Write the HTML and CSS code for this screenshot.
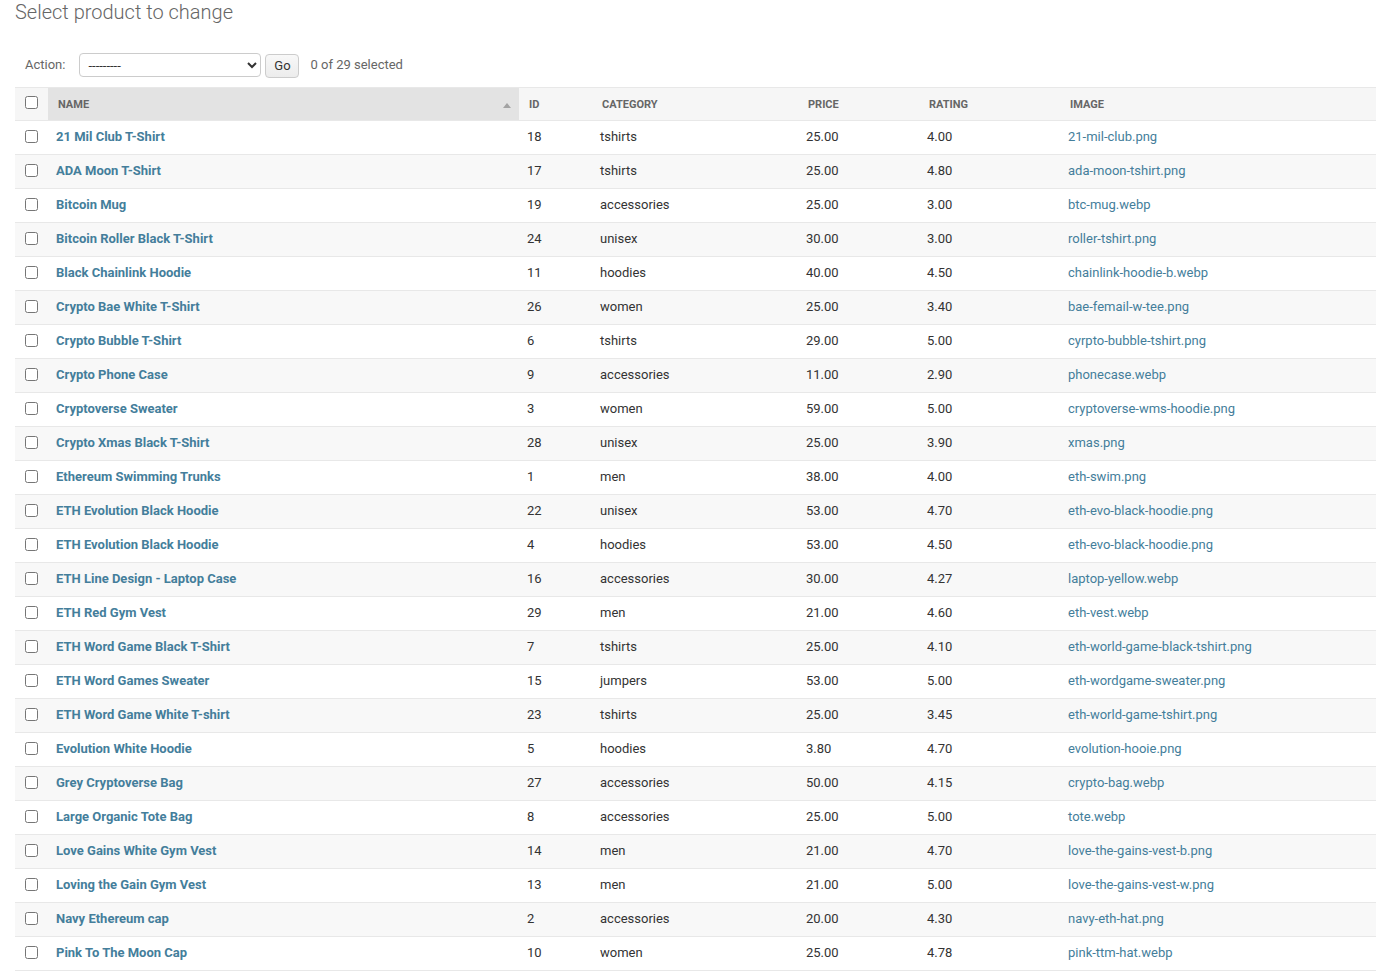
FILE: index.html
```html
<!DOCTYPE html>
<html lang="en">
<head>
<meta charset="utf-8">
<title>Select product to change</title>
<link rel="stylesheet" href="styles.css">
</head>
<body>
<div class="content">
  <h1 class="title">Select product to change</h1>
  <div class="actions">
    <label class="action-label">Action:</label>
    <select class="action-select"><option>---------</option><option>Delete selected products</option></select>
    <button class="go-btn" type="button">Go</button>
    <span class="counter">0 of 29 selected</span>
  </div>
  <table class="result-list">
    <colgroup>
      <col class="c-check"><col class="c-name"><col class="c-id"><col class="c-cat"><col class="c-price"><col class="c-rating"><col class="c-image">
    </colgroup>
    <thead>
      <tr>
        <th class="check-col"><input type="checkbox"></th>
        <th class="sorted"><div class="th-inner"><span>Name</span><svg class="sort-icon" width="8" height="5" viewBox="0 0 8 5"><path d="M0 5 L4 0 L8 5 Z" fill="#a3a3a3"/></svg></div></th>
        <th>Id</th>
        <th>Category</th>
        <th>Price</th>
        <th>Rating</th>
        <th>Image</th>
      </tr>
    </thead>
    <tbody>
      <tr><td class="check-col"><input type="checkbox"></td><th><a href="#">21 Mil Club T-Shirt</a></th><td>18</td><td>tshirts</td><td>25.00</td><td>4.00</td><td><a class="file" href="#">21-mil-club.png</a></td></tr>
      <tr><td class="check-col"><input type="checkbox"></td><th><a href="#">ADA Moon T-Shirt</a></th><td>17</td><td>tshirts</td><td>25.00</td><td>4.80</td><td><a class="file" href="#">ada-moon-tshirt.png</a></td></tr>
      <tr><td class="check-col"><input type="checkbox"></td><th><a href="#">Bitcoin Mug</a></th><td>19</td><td>accessories</td><td>25.00</td><td>3.00</td><td><a class="file" href="#">btc-mug.webp</a></td></tr>
      <tr><td class="check-col"><input type="checkbox"></td><th><a href="#">Bitcoin Roller Black T-Shirt</a></th><td>24</td><td>unisex</td><td>30.00</td><td>3.00</td><td><a class="file" href="#">roller-tshirt.png</a></td></tr>
      <tr><td class="check-col"><input type="checkbox"></td><th><a href="#">Black Chainlink Hoodie</a></th><td>11</td><td>hoodies</td><td>40.00</td><td>4.50</td><td><a class="file" href="#">chainlink-hoodie-b.webp</a></td></tr>
      <tr><td class="check-col"><input type="checkbox"></td><th><a href="#">Crypto Bae White T-Shirt</a></th><td>26</td><td>women</td><td>25.00</td><td>3.40</td><td><a class="file" href="#">bae-femail-w-tee.png</a></td></tr>
      <tr><td class="check-col"><input type="checkbox"></td><th><a href="#">Crypto Bubble T-Shirt</a></th><td>6</td><td>tshirts</td><td>29.00</td><td>5.00</td><td><a class="file" href="#">cyrpto-bubble-tshirt.png</a></td></tr>
      <tr><td class="check-col"><input type="checkbox"></td><th><a href="#">Crypto Phone Case</a></th><td>9</td><td>accessories</td><td>11.00</td><td>2.90</td><td><a class="file" href="#">phonecase.webp</a></td></tr>
      <tr><td class="check-col"><input type="checkbox"></td><th><a href="#">Cryptoverse Sweater</a></th><td>3</td><td>women</td><td>59.00</td><td>5.00</td><td><a class="file" href="#">cryptoverse-wms-hoodie.png</a></td></tr>
      <tr><td class="check-col"><input type="checkbox"></td><th><a href="#">Crypto Xmas Black T-Shirt</a></th><td>28</td><td>unisex</td><td>25.00</td><td>3.90</td><td><a class="file" href="#">xmas.png</a></td></tr>
      <tr><td class="check-col"><input type="checkbox"></td><th><a href="#">Ethereum Swimming Trunks</a></th><td>1</td><td>men</td><td>38.00</td><td>4.00</td><td><a class="file" href="#">eth-swim.png</a></td></tr>
      <tr><td class="check-col"><input type="checkbox"></td><th><a href="#">ETH Evolution Black Hoodie</a></th><td>22</td><td>unisex</td><td>53.00</td><td>4.70</td><td><a class="file" href="#">eth-evo-black-hoodie.png</a></td></tr>
      <tr><td class="check-col"><input type="checkbox"></td><th><a href="#">ETH Evolution Black Hoodie</a></th><td>4</td><td>hoodies</td><td>53.00</td><td>4.50</td><td><a class="file" href="#">eth-evo-black-hoodie.png</a></td></tr>
      <tr><td class="check-col"><input type="checkbox"></td><th><a href="#">ETH Line Design - Laptop Case</a></th><td>16</td><td>accessories</td><td>30.00</td><td>4.27</td><td><a class="file" href="#">laptop-yellow.webp</a></td></tr>
      <tr><td class="check-col"><input type="checkbox"></td><th><a href="#">ETH Red Gym Vest</a></th><td>29</td><td>men</td><td>21.00</td><td>4.60</td><td><a class="file" href="#">eth-vest.webp</a></td></tr>
      <tr><td class="check-col"><input type="checkbox"></td><th><a href="#">ETH Word Game Black T-Shirt</a></th><td>7</td><td>tshirts</td><td>25.00</td><td>4.10</td><td><a class="file" href="#">eth-world-game-black-tshirt.png</a></td></tr>
      <tr><td class="check-col"><input type="checkbox"></td><th><a href="#">ETH Word Games Sweater</a></th><td>15</td><td>jumpers</td><td>53.00</td><td>5.00</td><td><a class="file" href="#">eth-wordgame-sweater.png</a></td></tr>
      <tr><td class="check-col"><input type="checkbox"></td><th><a href="#">ETH Word Game White T-shirt</a></th><td>23</td><td>tshirts</td><td>25.00</td><td>3.45</td><td><a class="file" href="#">eth-world-game-tshirt.png</a></td></tr>
      <tr><td class="check-col"><input type="checkbox"></td><th><a href="#">Evolution White Hoodie</a></th><td>5</td><td>hoodies</td><td>3.80</td><td>4.70</td><td><a class="file" href="#">evolution-hooie.png</a></td></tr>
      <tr><td class="check-col"><input type="checkbox"></td><th><a href="#">Grey Cryptoverse Bag</a></th><td>27</td><td>accessories</td><td>50.00</td><td>4.15</td><td><a class="file" href="#">crypto-bag.webp</a></td></tr>
      <tr><td class="check-col"><input type="checkbox"></td><th><a href="#">Large Organic Tote Bag</a></th><td>8</td><td>accessories</td><td>25.00</td><td>5.00</td><td><a class="file" href="#">tote.webp</a></td></tr>
      <tr><td class="check-col"><input type="checkbox"></td><th><a href="#">Love Gains White Gym Vest</a></th><td>14</td><td>men</td><td>21.00</td><td>4.70</td><td><a class="file" href="#">love-the-gains-vest-b.png</a></td></tr>
      <tr><td class="check-col"><input type="checkbox"></td><th><a href="#">Loving the Gain Gym Vest</a></th><td>13</td><td>men</td><td>21.00</td><td>5.00</td><td><a class="file" href="#">love-the-gains-vest-w.png</a></td></tr>
      <tr><td class="check-col"><input type="checkbox"></td><th><a href="#">Navy Ethereum cap</a></th><td>2</td><td>accessories</td><td>20.00</td><td>4.30</td><td><a class="file" href="#">navy-eth-hat.png</a></td></tr>
      <tr><td class="check-col"><input type="checkbox"></td><th><a href="#">Pink To The Moon Cap</a></th><td>10</td><td>women</td><td>25.00</td><td>4.78</td><td><a class="file" href="#">pink-ttm-hat.webp</a></td></tr>
    </tbody>
  </table>
</div>
</body>
</html>
```

FILE: styles.css
```css
html, body {
  margin: 0;
  padding: 0;
  height: 100%;
  overflow: hidden;
  background: #fff;
}

body {
  font-family: Roboto, "Liberation Sans", sans-serif;
  font-size: 13px;
  color: #333;
}

.content {
  padding-left: 15px;
}

.title {
  margin: 0 0 21px 0;
  padding-top: 2px;
  font-size: 20px;
  line-height: 20px;
  font-weight: 300;
  color: #666;
}

.actions {
  display: flex;
  align-items: center;
  height: 24px;
  padding: 10px 10px;
}

.action-label {
  color: #666;
  font-size: 13px;
  margin-right: 14px;
  position: relative;
  top: -1px;
}

.action-select {
  width: 182px;
  height: 24px;
  border: 1px solid #ccc;
  border-radius: 4px;
  background: #fff;
  font-family: Roboto, "Liberation Sans", sans-serif;
  font-size: 13px;
  color: #333;
  padding: 0 4px;
  margin: 0;
}

.go-btn {
  margin-left: 4px;
  height: 24px;
  width: 34px;
  border: 1px solid #ccc;
  border-radius: 4px;
  background: linear-gradient(#f8f8f8, #ececec);
  font-family: Roboto, "Liberation Sans", sans-serif;
  font-size: 13px;
  color: #333;
  padding: 0;
  margin-top: 1px;
}

.counter {
  margin-left: 11px;
  color: #666;
  font-size: 13px;
  position: relative;
  top: -1px;
}

.result-list {
  width: 1361px;
  table-layout: fixed;
  border-collapse: collapse;
}

.c-check { width: 33px; }
.c-name { width: 471px; }
.c-id { width: 73px; }
.c-cat { width: 206px; }
.c-price { width: 121px; }
.c-rating { width: 141px; }
.c-image { width: 316px; }

.result-list thead th {
  height: 32px;
  padding: 0 10px;
  background: #f6f6f6;
  border-top: 1px solid #e8e8e8;
  border-bottom: 1px solid #e8e8e8;
  text-align: left;
  font-size: 11px;
  font-weight: 700;
  text-transform: uppercase;
  color: #666;
  vertical-align: middle;
}

.result-list thead th.sorted {
  background: #e3e3e3;
  padding-right: 8px;
}

.th-inner {
  display: flex;
  align-items: center;
  justify-content: space-between;
}

.sort-icon {
  display: block;
  margin-top: 2px;
}

.result-list thead th.check-col,
.result-list tbody td.check-col {
  padding: 0 0 0 6px;
}

.result-list input[type="checkbox"] {
  margin: 0 0 0 4px;
  width: 13px;
  height: 13px;
  vertical-align: middle;
  position: relative;
  top: -2px;
}

.result-list tbody td,
.result-list tbody th {
  height: 31px;
  padding: 0 8px 2px 8px;
  border-bottom: 1px solid #e8e8e8;
  text-align: left;
  vertical-align: middle;
  font-size: 13px;
  font-weight: 400;
  color: #333;
  white-space: nowrap;
}

.result-list tbody td.check-col {
  padding-bottom: 0;
  height: 33px;
}

.result-list tbody tr:nth-child(even) td,
.result-list tbody tr:nth-child(even) th {
  background: #f8f8f8;
}

.result-list tbody th a {
  color: #447e9b;
  font-weight: 700;
  text-decoration: none;
}

.result-list a.file {
  color: #447e9b;
  text-decoration: none;
}
```
